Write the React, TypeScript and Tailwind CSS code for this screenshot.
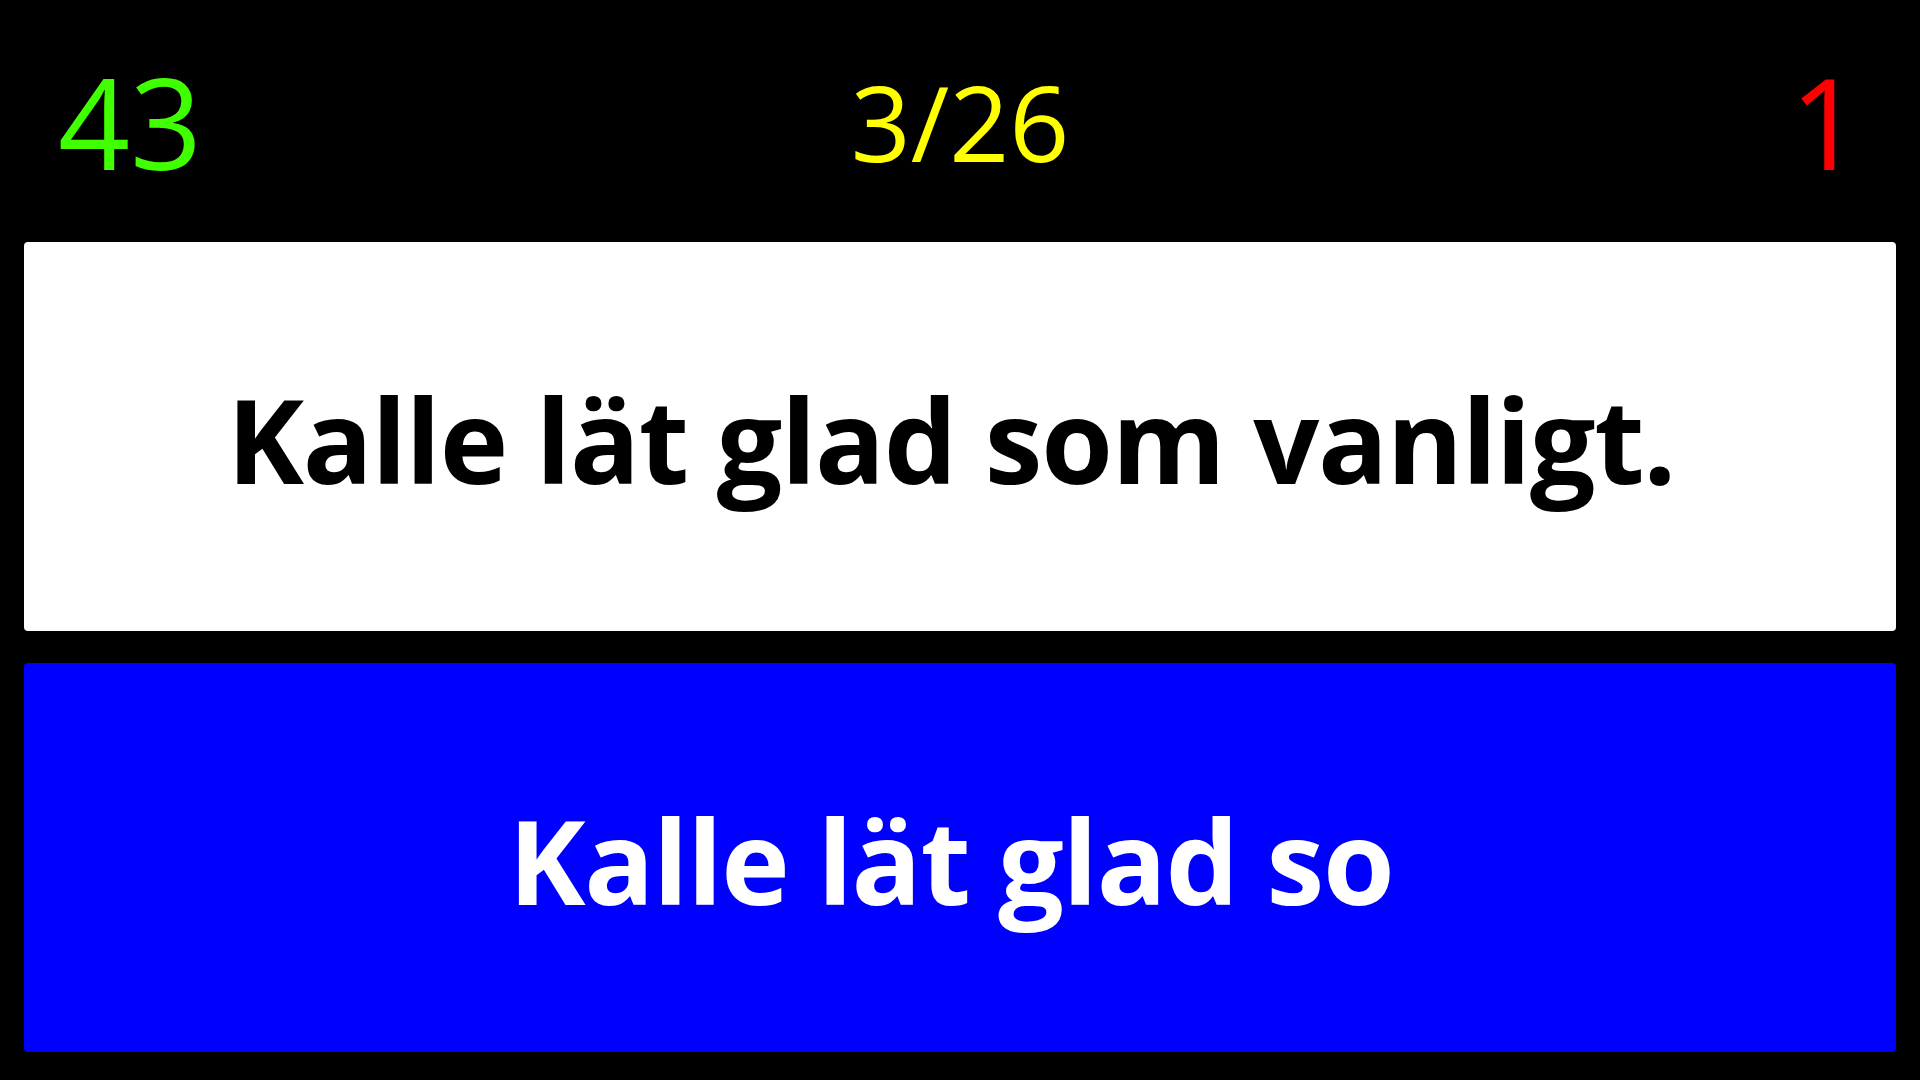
import React from 'react';

const font = { fontFamily: '"Open Sans", "Noto Sans", sans-serif' };

function Card({ text, className }: { text: string; className: string }) {
  return (
    <div className={`flex-1 rounded flex items-center justify-center ${className}`}>
      <span className="text-[116px] font-bold leading-none tracking-[-0.011em] pt-1 pr-[18px]">{text}</span>
    </div>
  );
}

export default function App() {
  return (
    <div className="h-screen w-full bg-black flex flex-col px-6 pb-7" style={font}>
      <header className="h-[242px] shrink-0 grid grid-cols-3 items-center px-[34px]">
        <span className="justify-self-start text-[126px] leading-none text-[#40ff00]">43</span>
        <span className="justify-self-center text-[105px] leading-none text-[#ffff00]">3/26</span>
        <span className="justify-self-end text-[126px] leading-none text-[#ff0000]">1</span>
      </header>
      <main className="flex-1 flex flex-col gap-8">
        <Card text="Kalle lät glad som vanligt." className="bg-white text-black" />
        <Card text="Kalle lät glad so" className="bg-[#0000ff] text-white" />
      </main>
    </div>
  );
}
